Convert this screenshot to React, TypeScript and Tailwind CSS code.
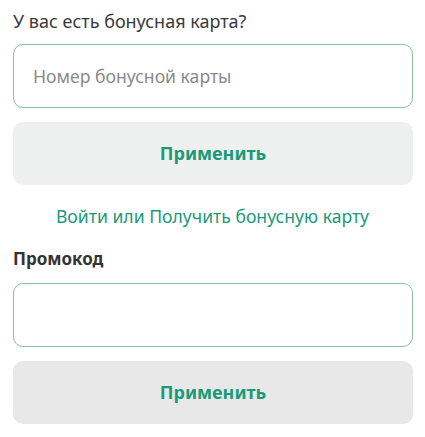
import React from 'react';

const font = { fontFamily: '"Noto Sans", "Open Sans", sans-serif' };

const ApplyButton: React.FC<{ bg: string }> = ({ bg }) => (
  <button
    type="button"
    className={`${bg} h-[63px] w-full rounded-[10px] text-[18px] font-bold text-[#1b9a78]`}
  >
    Применить
  </button>
);

const App: React.FC = () => {
  return (
    <div className="min-h-screen w-[425px] bg-white px-[13px] pt-[8px]" style={font}>
      <p className="text-[18px] leading-[26px] text-[#3a3a3a]">У вас есть бонусная карта?</p>

      <input
        className="mt-[10px] block h-[64px] w-[400px] rounded-[10px] border border-[#8cbf9c] px-[19px] text-[17.6px] text-[#333] outline-none placeholder:text-[#8a8a8a]"
        placeholder="Номер бонусной карты"
      />

      <div className="mt-[14px] w-[400px]">
        <ApplyButton bg="bg-[#eef0ef]" />
      </div>

      <div className="mt-[18px] text-center text-[17.6px] leading-[26px] text-[#1b9a78]">
        Войти или Получить бонусную карту
      </div>

      <p className="mt-[17px] text-[17px] font-bold leading-[26px] text-[#333]">Промокод</p>

      <input className="mt-[11px] block h-[64px] w-[400px] rounded-[10px] border border-[#8cbf9c] px-[19px] text-[17px] outline-none" />

      <div className="mt-[14px] w-[400px]">
        <ApplyButton bg="bg-[#e8e8e8]" />
      </div>
    </div>
  );
};

export default App;
